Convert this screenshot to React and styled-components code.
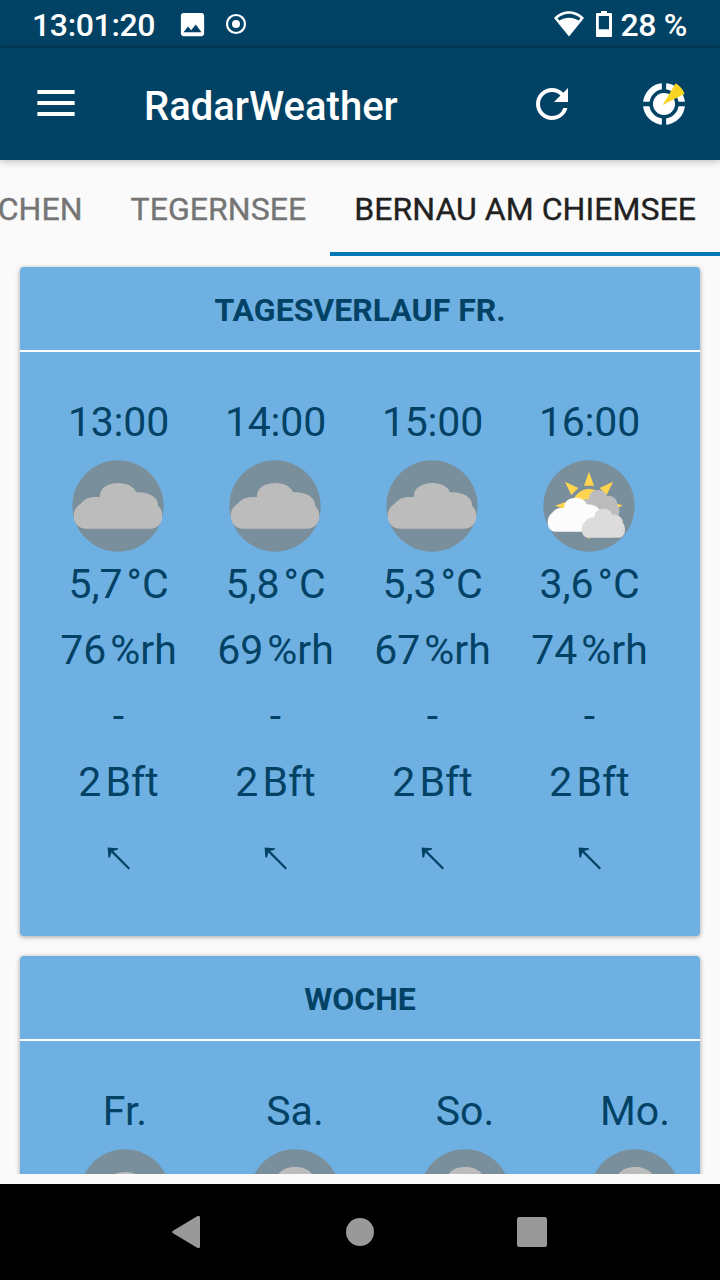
import React from "react";
import styled, { createGlobalStyle } from "styled-components";
import { MdImage, MdRefresh } from "react-icons/md";

const GlobalStyle = createGlobalStyle`
  *, *::before, *::after { box-sizing: border-box; }
  body { margin: 0; background: #fafafa; font-family: Roboto, "Liberation Sans", sans-serif; }
  svg { display: block; flex: none; }
`;

const navy = "#024265";
const sky = "#6fb0e3";

const Screen = styled.div`
  width: 720px;
  height: 1280px;
  overflow: hidden;
  display: flex;
  flex-direction: column;
  background: #fafafa;
`;

const StatusBar = styled.header`
  height: 48px;
  flex: none;
  display: flex;
  align-items: center;
  padding: 0 33px 0 32px;
  background: linear-gradient(${navy} 44px, #023c5d);
  color: #fff;
  font-size: 32px;
  font-weight: 500;
  letter-spacing: -0.35px;
  line-height: 48px;
  white-space: pre;
`;

const Clock = styled.span`
  width: 145px;
  padding-top: 2px;
`;

const Notifications = styled.div`
  display: flex;
  align-items: center;
  gap: 17px;
  flex: 1;
`;

const Battery = styled.div`
  display: flex;
  align-items: center;
  gap: 10.5px;
`;

const BatteryLevel = styled.span`
  margin-left: -1.5px;
  padding-top: 2px;
`;

const AppBar = styled.div`
  position: relative;
  height: 112px;
  flex: none;
  display: flex;
  align-items: center;
  padding: 0 34px 0 37px;
  background: ${navy};
  color: #fff;
  box-shadow: 0 1px 8px rgba(0, 0, 0, 0.28);
`;

const Title = styled.h1`
  flex: 1;
  margin: 5px 0 0 69px;
  font-size: 40px;
  font-weight: 500;
  line-height: 48px;
`;

const Actions = styled.div`
  display: flex;
  align-items: center;
  gap: 66px;
`;

const Tabs = styled.nav`
  height: 96px;
  flex: none;
  display: flex;
  justify-content: flex-end;
  overflow: hidden;
`;

const Tab = styled.div`
  flex: none;
  padding: 0 24px;
  border-bottom: 4px solid ${(p) => (p.$active ? "#0277b5" : "transparent")};
  color: ${(p) => (p.$active ? "#212121" : "#757575")};
  font-size: 32px;
  letter-spacing: 0.05px;
  -webkit-text-stroke: 0.35px currentColor;
  line-height: 98px;
  height: 96px;
  white-space: nowrap;
`;

const Content = styled.main`
  height: 918px;
  flex: none;
  overflow: hidden;
  padding: 11px 20px 0;
  display: flex;
  flex-direction: column;
  gap: 20px;
`;

const Card = styled.section`
  flex: none;
  height: 669px;
  border-radius: 4px;
  overflow: hidden;
  background: ${sky};
  color: ${navy};
  box-shadow: 0 1px 5px rgba(0, 0, 0, 0.36);
`;

const CardTitle = styled.h2`
  height: 85px;
  margin: 0;
  border-bottom: 2px solid #fff;
  text-align: center;
  font-size: 32px;
  font-weight: 700;
  line-height: 86px;
`;

const Forecast = styled.div`
  display: flex;
  padding: 37px 0 0 20px;
`;

const Column = styled.div`
  flex: none;
  width: ${(p) => p.$width}px;
  display: flex;
  flex-direction: column;
  align-items: center;
`;

const Value = styled.div`
  height: 66px;
  font-size: 41px;
  letter-spacing: ${(p) => (p.$tight ? "-0.2px" : "0")};
  line-height: 66px;
  white-space: nowrap;
`;

const Unit = styled.span`
  margin-left: ${(p) => p.$gap}px;
`;

const IconSlot = styled.div`
  height: 96px;
  padding-top: 5px;
  margin-left: -1px;
`;

const WindSlot = styled.div`
  height: 66px;
  padding-top: 20px;
`;

const NavBar = styled.footer`
  height: 96px;
  margin-top: 10px;
  flex: none;
  display: flex;
  align-items: center;
  justify-content: center;
  gap: 140px;
  background: #000;
`;

const cloudPath =
  "M40 206C18 206 3 190 3 168C3 152 11 138 24 131C35 117 50 111 68 111H82C79 86 104 69 137 69C164 69 184 80 190 97C225 93 259 112 256 137C265 144 269 157 269 168C269 190 255 206 232 206Z";

const Cloud = ({ x, y, w, h, fill }) => (
  <path
    d={cloudPath}
    fill={fill}
    transform={`translate(${x} ${y}) scale(${w / 266} ${h / 137}) translate(-3 -69)`}
  />
);

const WeatherIcon = ({ kind }) => (
  <svg width="92" height="92" viewBox="0 0 276 276">
    <circle cx="138" cy="138" r="137" fill="#798f9b" />
    {kind === "cloudy" && <Cloud x={5} y={69} w={266} h={137} fill="#bcbcbc" />}
    {kind === "rain" && <Cloud x={5} y={54} w={266} h={137} fill="#bcbcbc" />}
    {kind === "partly" && (
      <>
        <g fill="#ffd54f">
          <circle cx="138" cy="137" r="50" />
          {[0, 45, 90, 135, 180, 225, 270, 315].map((a) => (
            <path key={a} d="M138 35L153 77H123Z" transform={`rotate(${a} 138 137)`} />
          ))}
        </g>
        <Cloud x={100} y={90} w={129} h={87} fill="#bcbcbc" />
        <Cloud x={14} y={113} w={167} h={102} fill="#fcfcfc" />
        <Cloud x={116} y={146} w={130} h={87} fill="#dbdcdb" />
      </>
    )}
  </svg>
);

const MenuIcon = () => (
  <svg width="38" height="30" viewBox="0 0 38 30" fill="#fff">
    <path d="M0.4 1h37.2v4H0.4zM0.4 12h37.2v4H0.4zM0.4 23h37.2v4H0.4z" />
  </svg>
);

const RadarIcon = () => (
  <svg width="44" height="44" viewBox="0 0 132 132">
    <circle cx="66" cy="66" r="53.5" fill="none" stroke="#fff" strokeWidth="19" />
    <path d="M66 0V132M0 66H132" stroke={navy} strokeWidth="13" />
    <circle cx="66" cy="66" r="33" fill="#fff" />
    <path d="M62 69L101 4Q119 15 128 35Z" fill="#f9d423" />
  </svg>
);

const RecordIcon = () => (
  <svg width="22" height="22" viewBox="0 0 22 22">
    <circle cx="11" cy="11" r="9" fill="none" stroke="#fff" strokeWidth="2.2" />
    <circle cx="11" cy="11" r="4" fill="#fff" />
  </svg>
);

const WifiIcon = () => (
  <svg width="32" height="28" viewBox="0 0 32 28">
    <path
      fillRule="evenodd"
      fill="#fff"
      d="M16 26.5L1 7.9C5 3.8 10.2 1.3 16 1.3S27 3.8 31 7.9ZM4.5 8.3L6.3 10.6C12 6.7 20 6.7 25.7 10.6L27.5 8.3C20.6 2.2 11.4 2.2 4.5 8.3Z"
    />
  </svg>
);

const BatteryIcon = () => (
  <svg width="16" height="28" viewBox="0 0 16 28">
    <path fillRule="evenodd" fill="#fff" d="M5 1H11V3H15Q16 3 16 4V26Q16 27 15 27H1Q0 27 0 26V4Q0 3 1 3H5ZM2.8 6V19.2H13V6Z" />
  </svg>
);

const WindArrow = () => (
  <svg width="24" height="46" viewBox="0 0 24 46" fill={navy}>
    <path d="M0.6 12.6L11 13.2V14.6L6.2 16L23 33L21.5 34.5L4.4 17.6L3 22.6H1.4Z" />
  </svg>
);

const hours = [
  { time: "13:00", icon: "cloudy", temp: "5,7", humidity: 76 },
  { time: "14:00", icon: "cloudy", temp: "5,8", humidity: 69 },
  { time: "15:00", icon: "cloudy", temp: "5,3", humidity: 67 },
  { time: "16:00", icon: "partly", temp: "3,6", humidity: 74 },
];

const days = [
  { day: "Fr.", icon: "cloudy" },
  { day: "Sa.", icon: "rain" },
  { day: "So.", icon: "rain" },
  { day: "Mo.", icon: "rain" },
];

export default function App() {
  return (
    <Screen>
      <GlobalStyle />
      <StatusBar>
        <Clock>13:01:20</Clock>
        <Notifications>
          <MdImage size={31} />
          <RecordIcon />
        </Notifications>
        <Battery>
          <WifiIcon />
          <BatteryIcon />
          <BatteryLevel>28 %</BatteryLevel>
        </Battery>
      </StatusBar>
      <AppBar>
        <MenuIcon />
        <Title>RadarWeather</Title>
        <Actions>
          <MdRefresh size={48} />
          <RadarIcon />
        </Actions>
      </AppBar>
      <Tabs>
        <Tab>MÜNCHEN</Tab>
        <Tab>TEGERNSEE</Tab>
        <Tab $active>BERNAU AM CHIEMSEE</Tab>
      </Tabs>
      <Content>
        <Card>
          <CardTitle>TAGESVERLAUF FR.</CardTitle>
          <Forecast>
            {hours.map((h) => (
              <Column key={h.time} $width={157}>
                <Value $tight>{h.time}</Value>
                <IconSlot>
                  <WeatherIcon kind={h.icon} />
                </IconSlot>
                <Value>
                  {h.temp}
                  <Unit $gap={4}>°C</Unit>
                </Value>
                <Value>
                  {h.humidity}
                  <Unit $gap={4}>%rh</Unit>
                </Value>
                <Value>-</Value>
                <Value>
                  2<Unit $gap={4}>Bft</Unit>
                </Value>
                <WindSlot>
                  <WindArrow />
                </WindSlot>
              </Column>
            ))}
          </Forecast>
        </Card>
        <Card>
          <CardTitle>WOCHE</CardTitle>
          <Forecast>
            {days.map((d) => (
              <Column key={d.day} $width={170}>
                <Value>{d.day}</Value>
                <IconSlot>
                  <WeatherIcon kind={d.icon} />
                </IconSlot>
              </Column>
            ))}
          </Forecast>
        </Card>
      </Content>
      <NavBar>
        <svg width="32" height="34" viewBox="2 0 32 34" fill="#999">
          <path d="M2.6 16Q1.6 17 2.6 18L27.6 33Q30 33.6 30 31.4V2.6Q30 0.4 27.6 1Z" />
        </svg>
        <svg width="32" height="32" viewBox="0 0 32 32" fill="#999">
          <circle cx="16" cy="16" r="14" />
        </svg>
        <svg width="32" height="32" viewBox="0 0 32 32" fill="#999">
          <rect x="1" y="1" width="30" height="30" rx="2.5" />
        </svg>
      </NavBar>
    </Screen>
  );
}
